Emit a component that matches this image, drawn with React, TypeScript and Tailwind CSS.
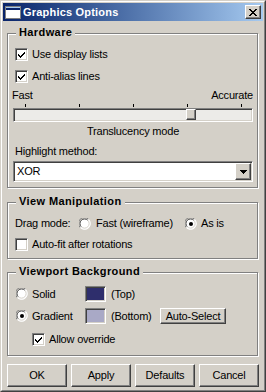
import React from 'react';

const FONT = "font-['Liberation_Sans',Arial,sans-serif]";

const raised =
  'border border-t-white border-l-white border-r-[#404040] border-b-[#404040] shadow-[inset_-1px_-1px_0_#808080] bg-[#d4d0c8]';
const sunken =
  'border border-t-[#808080] border-l-[#808080] border-r-white border-b-white shadow-[inset_1px_1px_0_#404040,inset_-1px_-1px_0_#d4d0c8]';

const Checkbox: React.FC<{ checked?: boolean }> = ({ checked }) => (
  <span className={`${sunken} flex w-[13px] h-[13px] shrink-0 items-center justify-center bg-white`}>
    {checked && (
      <svg width="7" height="7" viewBox="0 0 7 7" shapeRendering="crispEdges">
        <path d="M0 2v3l2 2 5-5V0L2 5z" fill="#000" />
      </svg>
    )}
  </span>
);

const Radio: React.FC<{ checked?: boolean }> = ({ checked }) => (
  <svg width="12" height="12" viewBox="0 0 12 12" className="shrink-0">
    <circle cx="6" cy="6" r="5.5" fill="#fff" />
    <path d="M1.2 9.5A5.5 5.5 0 0 1 9.5 1.2" fill="none" stroke="#808080" strokeWidth="1" />
    <path d="M2.3 8.8A4.5 4.5 0 0 1 8.8 2.3" fill="none" stroke="#404040" strokeWidth="1" />
    <path d="M9.5 1.2A5.5 5.5 0 0 1 1.2 9.5" fill="none" stroke="#fff" strokeWidth="1" />
    <path d="M8.8 2.3A4.5 4.5 0 0 1 2.3 8.8" fill="none" stroke="#d4d0c8" strokeWidth="1" />
    {checked && <circle cx="6" cy="6" r="2" fill="#000" />}
  </svg>
);

const Group: React.FC<{ title: string; className?: string; children: React.ReactNode }> = ({
  title,
  className = '',
  children,
}) => (
  <div
    className={`relative ml-[4px] mr-[5px] border border-[#808080] shadow-[1px_1px_0_#fff,inset_1px_1px_0_#fff] ${className}`}
  >
    <span className="absolute left-[8px] -top-[8px] bg-[#d4d0c8] px-[3px] text-[11px] leading-[13px] font-bold tracking-[0.4px] text-black">
      {title}
    </span>
    {children}
  </div>
);

export default function App() {
  return (
    <div className={`${FONT} w-[266px] h-[392px] border border-t-[#d4d0c8] border-l-[#d4d0c8] border-r-[#404040] border-b-[#404040] bg-[#d4d0c8] text-[11px] leading-[13px] tracking-[-0.2px] text-black select-none`}>
      <div className="h-full border border-t-white border-l-white border-r-[#808080] border-b-[#808080] p-[1px] flex flex-col">
        {/* Title bar */}
        <div className="h-[18px] shrink-0 flex items-center bg-gradient-to-r from-[#0a246a] to-[#a6caf0]">
          <svg width="16" height="13" viewBox="0 0 16 13" className="ml-[2px] shrink-0" shapeRendering="crispEdges">
            <rect x="0" y="0" width="16" height="13" fill="#808080" />
            <rect x="1" y="1" width="14" height="11" fill="#fff" />
            <rect x="1" y="1" width="14" height="3" fill="#0a246a" />
            <rect x="1" y="1" width="14" height="1" fill="#a6caf0" />
          </svg>
          <span className="ml-[2px] font-bold text-white text-[11px] tracking-[0.2px]">Graphics Options</span>
          <button className={`${raised} ml-auto mr-[2px] w-[16px] h-[14px] flex items-center justify-center p-0`}>
            <svg width="8" height="7" viewBox="0 0 8 7" shapeRendering="crispEdges">
              <path d="M0 0h2v1H0zM6 0h2v1H6zM1 1h2v1H1zM5 1h2v1H5zM2 2h4v1H2zM3 3h2v1H3zM2 4h4v1H2zM1 5h2v1H1zM5 5h2v1H5zM0 6h2v1H0zM6 6h2v1H6z" fill="#000" />
            </svg>
          </button>
        </div>

        {/* Hardware */}
        <Group title="Hardware" className="mt-[12px] h-[155px] pl-[5px] pr-[4px]">
          <div className="mt-[14px] ml-[2px] flex items-center gap-[4px] h-[13px]">
            <Checkbox checked />
            <span>Use display lists</span>
          </div>
          <div className="mt-[9px] ml-[2px] flex items-center gap-[4px] h-[13px]">
            <Checkbox checked />
            <span>Anti-alias lines</span>
          </div>
          <div className="mt-[6px] flex justify-between h-[13px]">
            <span className="-ml-[1px]">Fast</span>
            <span>Accurate</span>
          </div>
          <div className="mt-[2px] h-[3px] flex justify-between pl-[12px] pr-[11px]">
            {[0, 1, 2, 3, 4].map((i) => (
              <span key={i} className="w-px h-[3px] bg-black" />
            ))}
          </div>
          <div className="relative mt-[1px] h-[14px]">
            <div className={`${sunken} h-full bg-[#ecebe8]`} />
            <div className={`${raised} absolute left-[173px] top-[1px] w-[10px] h-[11px]`} />
          </div>
          <div className="mt-[3px] text-center h-[13px]">Translucency mode</div>
          <div className="mt-[7px] ml-[2px] h-[13px]">Highlight method:</div>
          <div className={`${sunken} mt-[3px] h-[21px] bg-white flex items-center pl-[2px] pr-[1px]`}>
            <span className="ml-[1px]">XOR</span>
            <span className={`${raised} ml-auto w-[16px] h-[17px] flex items-center justify-center`}>
              <svg width="7" height="4" viewBox="0 0 7 4" shapeRendering="crispEdges">
                <path d="M0 0h7v1H0zM1 1h5v1H1zM2 2h3v1H2zM3 3h1v1H3z" fill="#000" />
              </svg>
            </span>
          </div>
        </Group>

        {/* View Manipulation */}
        <Group title="View Manipulation" className="mt-[14px] h-[57px] pl-[5px] pr-[4px]">
          <div className="mt-[14px] flex items-center h-[13px]">
            <span className="ml-[2px] w-[64px]">Drag mode:</span>
            <Radio />
            <span className="ml-[5px] w-[89px]">Fast (wireframe)</span>
            <Radio checked />
            <span className="ml-[4px]">As is</span>
          </div>
          <div className="mt-[8px] ml-[2px] flex items-center gap-[4px] h-[13px]">
            <Checkbox />
            <span>Auto-fit after rotations</span>
          </div>
        </Group>

        {/* Viewport Background */}
        <Group title="Viewport Background" className="mt-[13px] h-[84px] pl-[5px] pr-[4px]">
          <div className="mt-[13px] flex items-center h-[16px]">
            <span className="ml-[3px]">
              <Radio />
            </span>
            <span className="ml-[4px] w-[53px]">Solid</span>
            <span className={`${sunken} w-[21px] h-[16px] bg-[#2e2e6c]`} />
            <span className="ml-[5px]">(Top)</span>
          </div>
          <div className="mt-[6px] flex items-center h-[16px]">
            <span className="ml-[3px]">
              <Radio checked />
            </span>
            <span className="ml-[4px] w-[53px]">Gradient</span>
            <span className={`${sunken} w-[21px] h-[16px] bg-[#a9a9c6]`} />
            <span className="ml-[5px] w-[49px]">(Bottom)</span>
            <span className={`${raised} w-[66px] h-[16px] flex items-center justify-center`}>Auto-Select</span>
          </div>
          <div className="mt-[9px] ml-[19px] flex items-center gap-[4px] h-[13px]">
            <Checkbox checked />
            <span>Allow override</span>
          </div>
        </Group>

        {/* Buttons */}
        <div className="mt-[8px] mx-[4px] flex gap-[4px]">
          {['OK', 'Apply', 'Defaults', 'Cancel'].map((label) => (
            <button
              key={label}
              className={`${raised} w-[60px] h-[23px] flex items-center justify-center text-[11px] text-black`}
            >
              {label}
            </button>
          ))}
        </div>
      </div>
    </div>
  );
}
